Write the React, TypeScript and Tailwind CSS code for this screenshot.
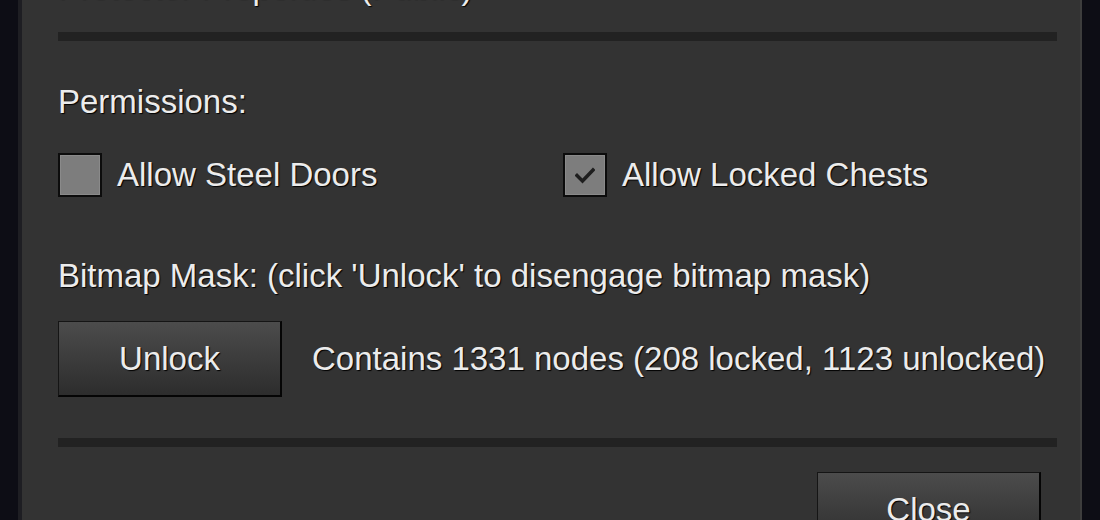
import React, { useState } from "react";

const txt = "text-[33px] leading-[32px] text-[#ececec] [text-shadow:1px_1px_1px_#000]";

function Checkbox({ label, checked, onToggle }: { label: string; checked: boolean; onToggle: () => void }) {
  return (
    <div className="flex items-center h-[44px] cursor-pointer" onClick={onToggle}>
      <div className="w-[44px] h-[44px] border-2 border-[#0c0c0c] bg-[#7d7d7d] flex items-center justify-center shadow-[inset_0_0_0_1px_#8a8a8a]">
        {checked && (
          <svg width="20" height="17" viewBox="0 0 20 17">
            <path d="M2 8.5 L7.5 14 L18 3" fill="none" stroke="#1e1e1e" strokeWidth="3.5" strokeLinecap="square" />
          </svg>
        )}
      </div>
      <span className={"ml-[15px] " + txt}>{label}</span>
    </div>
  );
}

function Button({ children }: { children: React.ReactNode }) {
  return (
    <button
      className={
        "shrink-0 w-[224px] h-[76px] flex items-center justify-center border border-[#151515] border-r-2 border-b-2 border-r-[#050505] border-b-[#050505] bg-gradient-to-b from-[#4c4c4c] to-[#2d2d2d] " +
        txt
      }
    >
      {children}
    </button>
  );
}

export default function App() {
  const [steel, setSteel] = useState(false);
  const [chests, setChests] = useState(true);

  return (
    <div className="w-[1100px] h-[520px] overflow-hidden flex bg-[#0d0d15] px-[18px]" style={{ fontFamily: '"Liberation Sans", Arimo, Arial, sans-serif' }}>
      <div className="flex-1 bg-[#333333] border-l-[4px] border-l-[#1e1e23] border-r-2 border-r-[#3d3d3d] pl-[36px] pr-[23px]">
        <div className={"mt-[-28px] h-[32px] whitespace-nowrap " + txt}>Protector Properties (Public)</div>
        <div className="mt-[28px] h-[9px] bg-[#222222]" />

        <div className={"mt-[45px] " + txt}>Permissions:</div>
        <div className="mt-[35px] grid grid-cols-[505px_1fr]">
          <Checkbox label="Allow Steel Doors" checked={steel} onToggle={() => setSteel(!steel)} />
          <Checkbox label="Allow Locked Chests" checked={chests} onToggle={() => setChests(!chests)} />
        </div>

        <div className={"mt-[63px] whitespace-nowrap " + txt}>Bitmap Mask: (click 'Unlock' to disengage bitmap mask)</div>
        <div className="mt-[29px] flex items-center">
          <Button>Unlock</Button>
          <span className={"ml-[30px] whitespace-nowrap " + txt}>Contains 1331 nodes (208 locked, 1123 unlocked)</span>
        </div>

        <div className="mt-[41px] h-[9px] bg-[#222222]" />
        <div className="mt-[25px] flex justify-end pr-[16px]">
          <Button>Close</Button>
        </div>
      </div>
    </div>
  );
}
